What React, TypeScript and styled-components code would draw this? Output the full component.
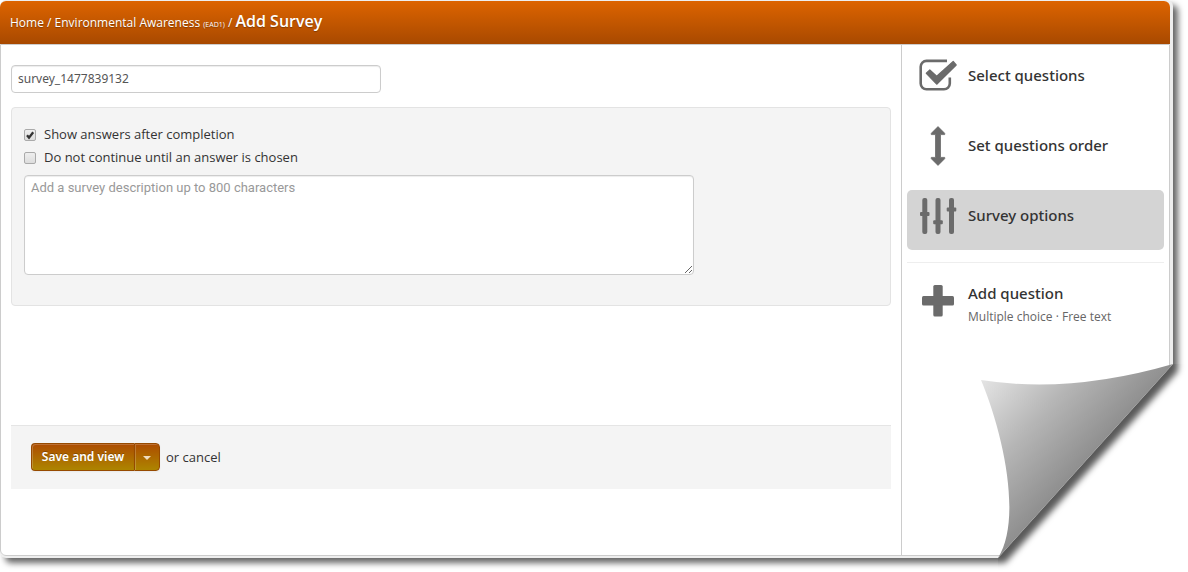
import React from 'react';
import styled, { createGlobalStyle, css } from 'styled-components';

const GlobalStyle = createGlobalStyle`
  *, *::before, *::after { box-sizing: border-box; }
  body {
    margin: 0;
    background: #fff;
    color: #333;
    font: 13px/20px 'Open Sans', 'Noto Sans', sans-serif;
  }
`;

const Sheet = styled.div`
  position: relative;
  margin: 0 15px 14px 0;
  padding: 1px 3px 2px 0;
  background: #eee;
  border-radius: 6px 6px 0 6px;
  box-shadow: 5px 5px 6px rgba(0, 0, 0, 0.6);
`;

const Page = styled.div`
  background: #fff;
  border-radius: 6px;
`;

const Header = styled.header`
  height: 43px;
  padding: 0 10px;
  border-radius: 6px 6px 0 0;
  background: linear-gradient(#dd6400, #a84900);
  color: #fff;
  font-size: 12px;
  font-weight: 500;
  line-height: 40px;
  text-shadow: 0 1px 1px rgba(0, 0, 0, 0.3);
  white-space: nowrap;
`;

const Crumb = styled.a`
  color: inherit;
  text-decoration: none;
`;

const CourseCode = styled.small`
  font-size: 7px;
`;

const PageTitle = styled.h1`
  display: inline;
  margin: 0;
  font-size: 16px;
  font-weight: 600;
`;

const Body = styled.div`
  display: flex;
  border: 1px solid #ccc;
  border-radius: 0 0 6px 6px;
`;

const Main = styled.form`
  flex: 1;
  min-width: 0;
  padding: 20px 10px 66px;
`;

const fieldStyle = css`
  display: block;
  max-width: 100%;
  border: 1px solid #ccc;
  border-radius: 4px;
  background: #fff;
  color: #555;
  font: 12px/18px 'Noto Sans', 'Open Sans', sans-serif;
  box-shadow: inset 0 1px 1px rgba(0, 0, 0, 0.075);
`;

const NameInput = styled.input`
  ${fieldStyle}
  width: 370px;
  height: 28px;
  padding: 3px 6px 5px;
`;

const Options = styled.section`
  height: 199px;
  margin: 14px 0 119px;
  padding: 15px 12px;
  border: 1px solid #e3e3e3;
  border-radius: 4px;
  background: #f4f4f4;
`;

const CheckLabel = styled.label`
  display: flex;
  align-items: center;
  gap: 8px;
  height: 23px;
`;

const CheckText = styled.span`
  padding-bottom: 2px;
`;

const CheckBox = styled.span`
  display: grid;
  width: 12px;
  height: 12px;

  > * { grid-area: 1 / 1; }
`;

const CheckInput = styled.input`
  appearance: none;
  width: 12px;
  height: 12px;
  margin: 0;
  border: 1px solid #aaa;
  border-radius: 2px;
  background: linear-gradient(#eee, #ddd);

  & + svg { visibility: hidden; pointer-events: none; }
  &:checked + svg { visibility: visible; }
`;

const Description = styled.textarea`
  ${fieldStyle}
  width: 670px;
  height: 100px;
  margin-top: 6px;
  padding: 3px 6px;
  font-family: Roboto, 'Noto Sans', sans-serif;
  font-size: 13px;

  &::placeholder { color: #999; }
`;

const Actions = styled.div`
  display: flex;
  align-items: flex-start;
  height: 64px;
  padding: 17px 20px;
  border-top: 1px solid #e5e5e5;
  background: #f4f4f4;
`;

const ButtonGroup = styled.div`
  display: flex;
  margin-right: 6px;
`;

const ActionButton = styled.button<{ $side: 'left' | 'right' }>`
  display: flex;
  align-items: center;
  justify-content: center;
  width: ${p => (p.$side === 'left' ? '103px' : '26px')};
  height: 28px;
  padding: 0;
  border: 1px solid #964a00;
  border-width: ${p => (p.$side === 'left' ? '1px 0 1px 1px' : '1px')};
  border-radius: ${p => (p.$side === 'left' ? '4px 0 0 4px' : '0 4px 4px 0')};
  background: linear-gradient(#ad4c00, #ad8500);
  box-shadow: inset 1px 1px 0 rgba(255, 255, 255, 0.2), 0 1px 2px rgba(0, 0, 0, 0.05);
  color: #fff;
  font: 600 12px/18px 'Noto Sans', 'Open Sans', sans-serif;
  text-shadow: 0 -1px 0 rgba(0, 0, 0, 0.25);
`;

const Caret = styled.span`
  margin-top: 2px;
  border: 4px solid transparent;
  border-top-color: #f0dcc0;
  border-bottom: 0;
`;

const CancelText = styled.span`
  line-height: 28px;
`;

const CancelLink = styled.a`
  color: inherit;
  text-decoration: none;
`;

const Sidebar = styled.nav`
  flex: 0 0 268px;
  display: flex;
  flex-direction: column;
  padding: 5px;
  border-left: 1px solid #ccc;
`;

const MenuItem = styled.a<{ $active?: boolean }>`
  display: flex;
  align-items: center;
  gap: 10px;
  height: 60px;
  margin-bottom: 10px;
  padding: 0 11px 8px;
  border-radius: 5px;
  background: ${p => (p.$active ? '#d4d4d4' : 'transparent')};
  color: #333;
  text-decoration: none;

  &:last-of-type { margin-bottom: 0; }
  svg { flex: none; fill: #6b6b6b; }
`;

const MenuTitle = styled.span`
  display: block;
  padding-bottom: 2px;
  font-family: 'Noto Sans', 'Open Sans', sans-serif;
  font-size: 15px;
  font-weight: 500;
  line-height: 22px;
`;

const MenuText = styled.span`
  padding-top: 8px;
`;

const MenuHint = styled.span`
  display: block;
  color: #666;
  font-size: 12px;
  line-height: 22px;
`;

const Divider = styled.hr`
  width: 100%;
  margin: 2px 0 12px;
  border: 0;
  border-top: 1px solid #eee;
`;

const PageCurl = styled.svg`
  position: absolute;
  right: -15px;
  bottom: -14px;
  pointer-events: none;
`;

const CheckMark = () => (
  <svg width="12" height="12" viewBox="0 0 12 12" aria-hidden="true">
    <path d="M3 6.3 5 8.6 9.2 3.2" fill="none" stroke="#333" strokeWidth="2.3" />
  </svg>
);

const SelectIcon = () => (
  <svg width="40" height="40" viewBox="0 0 40 40" aria-hidden="true">
    <path
      d="M29 4.900H8.500A5.800 5.800 0 0 0 2.700 10.700V27.500a5.800 5.800 0 0 0 5.800 5.800H26a5.800 5.800 0 0 0 5.800-5.800V21.500"
      fill="none" stroke="#6b6b6b" strokeWidth="2.600"
    />
    <path
      d="M8.300 17.300 11.800 14 18.700 20.300 35.200 5.500 38.200 9 18.700 28.200Z"
      stroke="#6b6b6b" strokeWidth="1.200" strokeLinejoin="round"
    />
  </svg>
);

const OrderIcon = () => (
  <svg width="40" height="40" viewBox="0 0 40 40" aria-hidden="true">
    <path
      d="M20 .6 26.700 7.300V8.600H22.500V31.400H26.700V32.700L20 39.400 13.300 32.700V31.400H17.500V8.600H13.300V7.300Z"
      stroke="#6b6b6b" strokeWidth=".8" strokeLinejoin="round"
    />
  </svg>
);

const OptionsIcon = () => (
  <svg width="40" height="40" viewBox="0 0 40 40" aria-hidden="true">
    <rect x="4.300" y="2" width="5" height="36" rx="2" />
    <rect x="17.500" y="2" width="5" height="36" rx="2" />
    <rect x="31" y="2" width="5" height="36" rx="2" />
    <rect x="2" y="16" width="9.500" height="4" rx="1" />
    <rect x="15.200" y="24.300" width="9.600" height="4" rx="1" />
    <rect x="28.700" y="11.600" width="9.600" height="4" rx="1" />
  </svg>
);

const PlusIcon = () => (
  <svg width="40" height="40" viewBox="0 0 40 40" aria-hidden="true">
    <rect x="15.300" y="4" width="9.400" height="31.500" rx="1.500" />
    <rect x="4" y="15" width="32" height="9.400" rx="1.500" />
  </svg>
);

const Curl = () => (
  <PageCurl width="228" height="232" viewBox="0 0 228 232" aria-hidden="true">
    <defs>
      <linearGradient id="fold" gradientUnits="userSpaceOnUse" x1="22" y1="40" x2="120" y2="130">
        <stop offset="0" stopColor="#e4e4e4" />
        <stop offset=".5" stopColor="#b6b6b6" />
        <stop offset="1" stopColor="#8e8e8e" />
      </linearGradient>
      <filter id="soften" filterUnits="userSpaceOnUse" x="-60" y="-60" width="320" height="320">
        <feGaussianBlur stdDeviation="3" />
      </filter>
      <clipPath id="outside">
        <path d="M213 24H228V232H38V218Z" />
      </clipPath>
    </defs>
    <g clipPath="url(#outside)">
      <rect width="228" height="232" fill="#fff" />
      <path
        d="M-50-50H218V31L45 223H-50Z"
        fill="#000" fillOpacity=".65" filter="url(#soften)"
      />
    </g>
    <path d="M21 40Q110 54 213 24L38 218C62 180 44 95 21 40Z" fill="url(#fold)" />
  </PageCurl>
);

type OptionProps = { label: string; checked?: boolean };

const Option = ({ label, checked }: OptionProps) => (
  <CheckLabel>
    <CheckBox>
      <CheckInput type="checkbox" defaultChecked={checked} />
      <CheckMark />
    </CheckBox>
    <CheckText>{label}</CheckText>
  </CheckLabel>
);

export default function App() {
  return (
    <>
      <GlobalStyle />
      <Sheet>
        <Page>
          <Header>
            <Crumb href="#home">Home</Crumb> /{' '}
            <Crumb href="#course">
              Environmental Awareness <CourseCode>(EAD1)</CourseCode>
            </Crumb>{' '}
            / <PageTitle>Add Survey</PageTitle>
          </Header>
          <Body>
            <Main onSubmit={e => e.preventDefault()}>
              <NameInput aria-label="Survey name" defaultValue="survey_1477839132" />
              <Options>
                <Option label="Show answers after completion" checked />
                <Option label="Do not continue until an answer is chosen" />
                <Description
                  aria-label="Survey description"
                  maxLength={800}
                  placeholder="Add a survey description up to 800 characters"
                />
              </Options>
              <Actions>
                <ButtonGroup>
                  <ActionButton type="submit" $side="left">Save and view</ActionButton>
                  <ActionButton type="button" $side="right" aria-label="More save options">
                    <Caret />
                  </ActionButton>
                </ButtonGroup>
                <CancelText>
                  or <CancelLink href="#cancel">cancel</CancelLink>
                </CancelText>
              </Actions>
            </Main>
            <Sidebar>
              <MenuItem href="#select">
                <SelectIcon />
                <MenuTitle>Select questions</MenuTitle>
              </MenuItem>
              <MenuItem href="#order">
                <OrderIcon />
                <MenuTitle>Set questions order</MenuTitle>
              </MenuItem>
              <MenuItem href="#options" $active>
                <OptionsIcon />
                <MenuTitle>Survey options</MenuTitle>
              </MenuItem>
              <Divider />
              <MenuItem href="#add">
                <PlusIcon />
                <MenuText>
                  <MenuTitle>Add question</MenuTitle>
                  <MenuHint>Multiple choice · Free text</MenuHint>
                </MenuText>
              </MenuItem>
            </Sidebar>
          </Body>
        </Page>
        <Curl />
      </Sheet>
    </>
  );
}
